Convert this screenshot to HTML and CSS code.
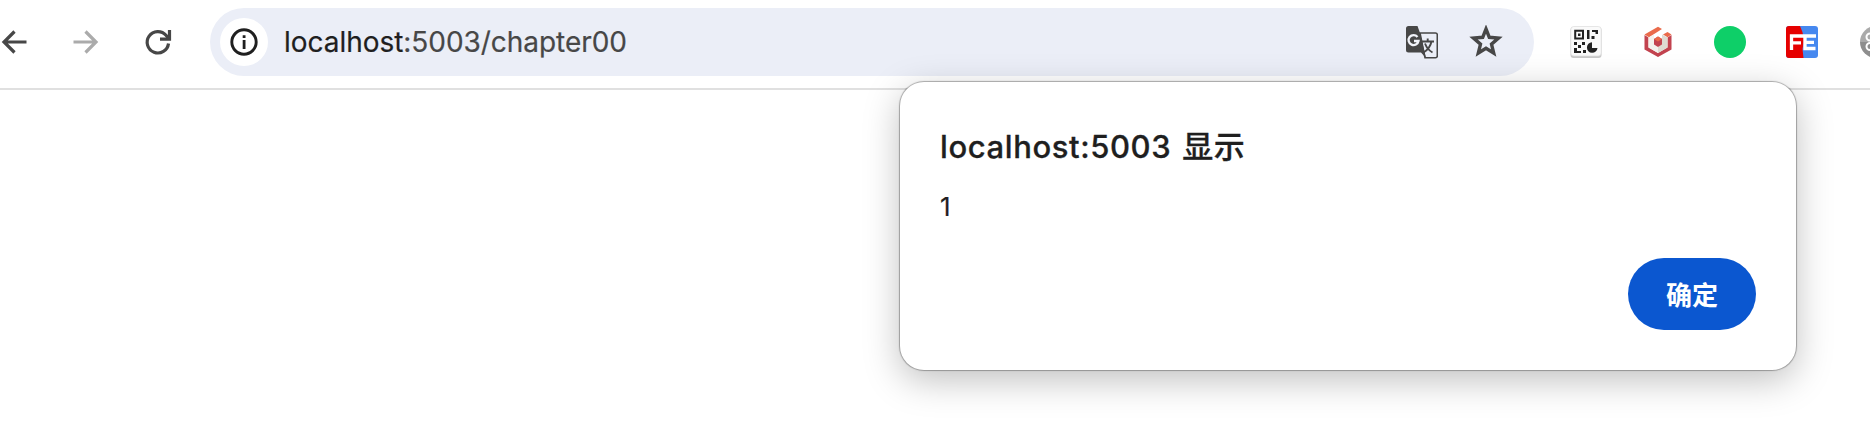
FILE: index.html
```html
<!DOCTYPE html>
<html lang="zh-CN">
<head>
<meta charset="utf-8">
<title>localhost:5003/chapter00</title>
<link rel="stylesheet" href="styles.css">
</head>
<body>
<header class="toolbar">
  <nav class="nav">
    <svg class="nav-icon" viewBox="0 0 28 28"><path d="M26.500 14H4M14.500 3.500L4 14L14.500 24.500"/></svg>
    <svg class="nav-icon nav-icon-off" viewBox="0 0 28 28"><path d="M1.500 14H24M13.500 3.500L24 14L13.500 24.500"/></svg>
    <svg class="nav-icon" viewBox="0 0 28 28"><path d="M24.500 15.500A10.700 10.700 0 1 1 22 7.300L24.500 10.300"/><path d="M25.500 2V11.200H16"/></svg>
  </nav>
  <div class="address">
    <span class="site-info">
      <svg viewBox="0 0 28 28"><circle cx="14" cy="14" r="12.200" fill="none" stroke="#1f1f1f" stroke-width="2.900"/><path d="M12.700 12h2.800v9h-2.800zM12.700 7.300h2.800v2.700h-2.800z" fill="#1f1f1f"/></svg>
    </span>
    <span class="url">localhost<span class="url-rest">:5003/chapter00</span></span>
    <svg class="translate" viewBox="0 0 32 33">
      <path d="M14 7H29.500A1.800 1.800 0 0 1 31.300 8.800V30A1.800 1.800 0 0 1 29.500 31.800H19L14 7Z" fill="none" stroke="#474747" stroke-width="1.600"/>
      <path d="M2.500 0H11.500L14 7L20 32L15 26.500H2.500A2.500 2.500 0 0 1 0 24V2.500A2.500 2.500 0 0 1 2.500 0Z" fill="#474747"/>
      <path d="M11.500 11A5 5 0 1 0 12.500 15H8" fill="none" stroke="#f1f3f9" stroke-width="2.300"/>
      <path d="M16 15.500H28M21.700 12.500V15.500M25.500 15.500C24.500 20.500 21.500 24 17.500 26.500M19 17.500C20.500 21.500 23 24.500 26.500 26.500" fill="none" stroke="#474747" stroke-width="1.900"/>
    </svg>
    <svg class="star" viewBox="0 0 34 32"><path d="M17 4L20.300 12.300L29.500 13.100L22.500 19.100L24.700 28L17 23.200L9.300 28L11.500 19.100L4.500 13.100L13.700 12.300Z" fill="none" stroke="#474747" stroke-width="3.400"/></svg>
  </div>
  <div class="extensions">
    <svg viewBox="0 0 32 32">
      <rect x=".5" y="1" width="31" height="31" rx="3" fill="#c9c9c9"/><rect x=".8" y=".5" width="30.400" height="29.500" rx="3" fill="#fafafa" stroke="#ddd" stroke-width=".7"/>
      <path d="M5.200 4.700H13V12.500H5.200Z" fill="none" stroke="#222" stroke-width="2"/>
      <path d="M8 7.500h2.500v2.500H8zM17 4h2.500v9H17zM22 4h6v4h-2.500V6H22zM21.500 10h3v3h-3zM4 16h3v3H4zM8 19h3v3H8zM12 16h3v3h-3zM4 22h3v3h4v2H4zM13 24h3v3h-3z" fill="#222"/>
      <path d="M22 16.200A5.300 5.300 0 1 0 27.500 22H22Z" fill="#222"/>
    </svg>
    <svg viewBox="0 0 32 32">
      <path d="M2.500 9L6.500 11.500V21.500L16 27L25.500 21.500V11.500L29.500 9V23.500L16 31L2.500 23.500Z" fill="#c2434f"/>
      <path d="M2.500 8.500L16 .800L20 3L7 11.200ZM21 8.500L25.500 6L29.500 8.500L25.500 11.200Z" fill="#ea6b4b"/>
      <path d="M6.500 11.500L12 8.500V18.500L16 21V27L6.500 21.500Z" fill="#f3f1ec"/><path d="M25.500 11.500L20 8.500V18.500L16 21V27L25.500 21.500Z" fill="#dedbd2"/>
      <path d="M16 10.500L20 13V18.500L16 21L12 18.500V13Z" fill="#c2434f"/><path d="M16 10.500L20 13L16 15.500L12 13Z" fill="#ea6b4b"/>
    </svg>
    <span class="dot"></span>
    <svg viewBox="0 0 32 32">
      <rect width="32" height="32" rx="3" fill="#4688ef"/><path d="M3 0H14Q20 12 16.500 23L17.500 32H3Q0 32 0 29V3Q0 0 3 0Z" fill="#e60000"/>
      <path d="M5.500 24V10H17.500M5.500 16.800H15M30 10H19V22.500H29.500M19 16.300H28" fill="none" stroke="#fff" stroke-width="3.300"/>
    </svg>
    <svg viewBox="0 0 32 32"><path d="M0 16A16 16 0 0 1 32 16Z" fill="#aaa"/><path d="M0 16A16 16 0 0 0 32 16Z" fill="#8e8e8e"/><g fill="none" stroke="#fff" stroke-width="2"><circle cx="10" cy="11" r="3.500"/><circle cx="10" cy="20.500" r="3.500"/></g></svg>
  </div>
</header>
<section class="dialog" role="dialog">
  <h1 class="dialog-title">localhost:5003 <span class="dialog-says">显示</span></h1>
  <p class="dialog-message">1</p>
  <div class="dialog-actions"><button class="confirm">确定</button></div>
</section>
</body>
</html>
```
FILE: styles.css
```css
* { box-sizing: border-box; }
body {
  margin: 0;
  height: 448px;
  overflow: hidden;
  background: #fff;
  color: #1f1f1f;
  font-family: Inter, "Noto Sans CJK SC", sans-serif;
}
.toolbar {
  display: flex;
  width: 1900px;
  height: 90px;
  padding-top: 8px;
  border-bottom: 2px solid #e0e0e0;
}
.nav {
  display: flex;
  align-items: center;
  gap: 44px;
  width: 210px;
  height: 68px;
}
.nav-icon {
  width: 28px;
  height: 28px;
  flex: none;
  fill: none;
  stroke: #474747;
  stroke-width: 3.2;
}
.nav-icon-off { stroke: #ababab; }
.address {
  display: flex;
  align-items: center;
  width: 1324px;
  height: 68px;
  padding: 0 31px 0 10px;
  border-radius: 34px;
  background: #ebeef7;
}
.site-info {
  display: flex;
  align-items: center;
  justify-content: center;
  width: 48px;
  height: 48px;
  border-radius: 50%;
  background: #fff;
}
.site-info svg { width: 28px; height: 28px; }
.url {
  flex: 1;
  margin-left: 16px;
  font-size: 28px;
  line-height: 36px;
  letter-spacing: -.04px;
  -webkit-text-stroke: .2px;
}
.url-rest { color: #474747; }
.translate { width: 32px; height: 33px; }
.star { width: 34px; height: 32px; margin-left: 31px; margin-top: -2px; }
.extensions {
  display: flex;
  align-items: center;
  gap: 40px;
  height: 68px;
  margin-left: 36px;
}
.extensions svg, .dot { width: 32px; height: 32px; flex: none; }
.extensions svg:last-child { margin-left: 2px; }
.dot { border-radius: 50%; background: #0ecf68; }
.dialog {
  position: absolute;
  left: 900px;
  top: 82px;
  width: 896px;
  height: 288px;
  padding: 44px 40px 40px;
  border-radius: 24px;
  background: #fff;
  box-shadow: 0 0 1px 1px rgba(0, 0, 0, .3), 0 10px 36px rgba(0, 0, 0, .25);
}
.dialog-title {
  display: flex;
  align-items: center;
  gap: 11px;
  margin: 0;
  font-size: 31px;
  font-weight: 500;
  line-height: 42px;
  letter-spacing: .6px;
  -webkit-text-stroke: .3px;
}
.dialog-message {
  margin: 21px 0 0;
  font-size: 26px;
  line-height: 36px;
  -webkit-text-stroke: .2px;
}
.dialog-actions {
  display: flex;
  justify-content: flex-end;
  margin-top: 33px;
}
.confirm {
  width: 128px;
  height: 72px;
  padding: 0;
  border: 0;
  border-radius: 36px;
  background: #0b57d0;
  color: #fff;
  font: 700 26px/36px "Noto Sans CJK SC", sans-serif;
}
```
